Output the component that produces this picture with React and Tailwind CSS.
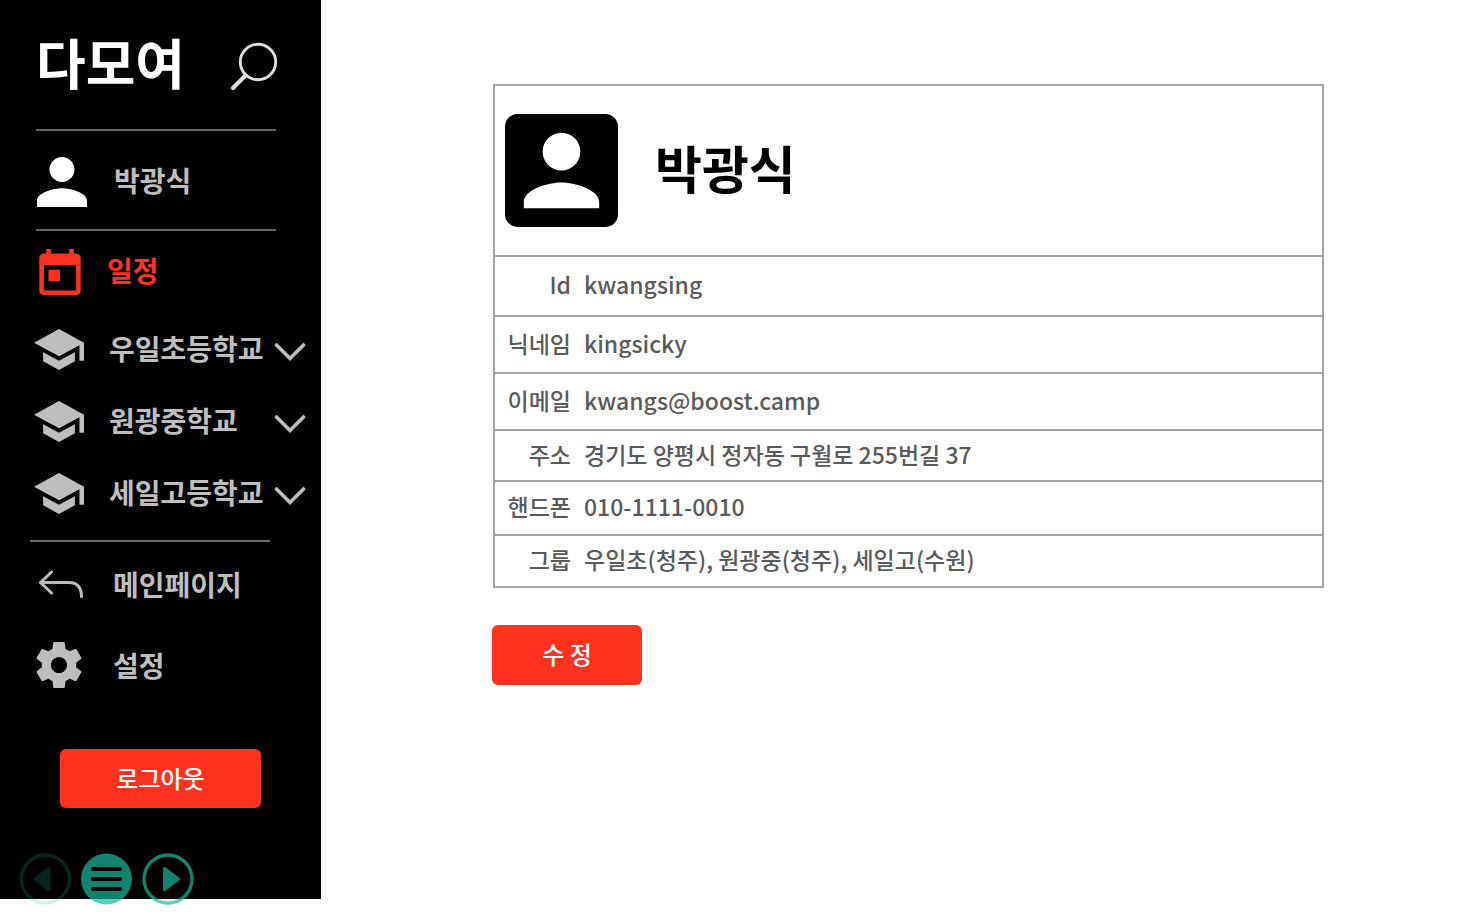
import React from "react";

const PERSON =
  "M12 12c2.21 0 4-1.79 4-4s-1.79-4-4-4-4 1.79-4 4 1.79 4 4 4zm0 2c-2.67 0-8 1.34-8 4v2h16v-2c0-2.66-5.33-4-8-4z";
const ACCOUNT_BOX =
  "M3 5v14c0 1.1.89 2 2 2h14c1.1 0 2-.9 2-2V5c0-1.1-.9-2-2-2H5c-1.11 0-2 .9-2 2zm12 4c0 1.66-1.34 3-3 3s-3-1.34-3-3 1.34-3 3-3 3 1.34 3 3zm-9 8c0-2 4-3.1 6-3.1s6 1.1 6 3.1v1H6v-1z";
const TODAY =
  "M19 3h-1V1h-2v2H8V1H6v2H5c-1.11 0-1.99.9-1.99 2L3 19c0 1.1.89 2 2 2h14c1.1 0 2-.9 2-2V5c0-1.1-.9-2-2-2zm0 16H5V8h14v11zM7 10h5v5H7z";
const SCHOOL =
  "M5 13.18v4L12 21l7-3.82v-4L12 17l-7-3.82zM12 3L1 9l11 6 9-4.91V17h2V9L12 3z";
const SETTINGS =
  "M19.43 12.98c.04-.32.07-.64.07-.98s-.03-.66-.07-.98l2.11-1.65c.19-.15.24-.42.12-.64l-2-3.46c-.12-.22-.39-.3-.61-.22l-2.49 1c-.52-.4-1.08-.73-1.69-.98l-.38-2.65C14.46 2.18 14.25 2 14 2h-4c-.25 0-.46.18-.49.42l-.38 2.65c-.61.25-1.17.59-1.69.98l-2.49-1c-.23-.09-.49 0-.61.22l-2 3.46c-.13.22-.07.49.12.64l2.11 1.65c-.04.32-.07.65-.07.98s.03.66.07.98l-2.11 1.65c-.19.15-.24.42-.12.64l2 3.46c.12.22.39.3.61.22l2.49-1c.52.4 1.08.73 1.69.98l.38 2.65c.03.24.24.42.49.42h4c.25 0 .46-.18.49-.42l.38-2.65c.61-.25 1.17-.59 1.69-.98l2.49 1c.23.09.49 0 .61-.22l2-3.46c.12-.22.07-.49-.12-.64l-2.11-1.65zM12 15.5c-1.93 0-3.5-1.57-3.5-3.5s1.57-3.5 3.5-3.5 3.5 1.57 3.5 3.5-1.57 3.5-3.5 3.5z";

function Glyph({ d, viewBox, className }) {
  return (
    <svg viewBox={viewBox} className={className} fill="currentColor" aria-hidden="true">
      <path d={d} />
    </svg>
  );
}

function SearchIcon() {
  return (
    <svg viewBox="0 0 48 48" className="h-12 w-12" fill="none" stroke="currentColor" strokeLinecap="round" aria-hidden="true">
      <circle cx="28" cy="20" r="17.7" strokeWidth="2.9" />
      <path d="M15.5 33.5 3 46" strokeWidth="4" />
    </svg>
  );
}

function BackIcon() {
  return (
    <svg viewBox="0 0 46 28" className="h-7 w-[46px]" fill="none" stroke="currentColor" strokeWidth="3" strokeLinecap="round" strokeLinejoin="round" aria-hidden="true">
      <path d="M13.5 2 2.5 12.500 13.500 23" />
      <path d="M3 12.500H31C39 12.500 43.500 17.500 43.500 26.500" />
    </svg>
  );
}

function ChevronIcon() {
  return (
    <svg viewBox="0 0 32 20" className="h-5 w-8" fill="none" stroke="currentColor" strokeWidth="3.6" strokeLinecap="round" aria-hidden="true">
      <path d="M2.500 3 16 16.500 29.500 3" />
    </svg>
  );
}

function School({ name }) {
  return (
    <li>
      <button type="button" className="flex h-[72px] w-full items-center pl-[34px] pr-[15px] text-left">
        <Glyph d={SCHOOL} viewBox="1 3 22 18" className="h-[41px] w-[50px] shrink-0" />
        <span className="ml-[25px] flex-1 pb-[2px] whitespace-nowrap">{name}</span>
        <span className="pt-[6px]">
          <ChevronIcon />
        </span>
      </button>
    </li>
  );
}

function Sidebar() {
  return (
    <aside className="w-[321px] shrink-0 bg-black pb-[91px] text-[28px] leading-10 font-bold text-[#bebebe]">
      <header className="flex h-[129px] items-center justify-between pl-9 pr-[43px]">
        <h1 className="pb-[6px] text-[54px] leading-[72px] text-white">다모여</h1>
        <button type="button" aria-label="검색" className="pt-[2px] text-[#dedede]">
          <SearchIcon />
        </button>
      </header>
      <hr className="ml-9 w-60 border-t-2 border-[#6b6b6b]" />
      <div className="flex h-[98px] items-center pl-[37px]">
        <Glyph d={PERSON} viewBox="4 4 16 16" className="mt-[3px] h-[50px] w-[50px] text-white" />
        <span className="ml-[27px]">박광식</span>
      </div>
      <hr className="ml-9 w-60 border-t-2 border-[#6b6b6b]" />
      <nav>
        <a href="#schedule" className="flex h-[82px] items-center pl-[39px] text-[#ff321f]">
          <Glyph d={TODAY} viewBox="3 1 18 20" className="h-[46px] w-[42px]" />
          <span className="ml-[26px] pb-1">일정</span>
        </a>
        <ul>
          <School name="우일초등학교" />
          <School name="원광중학교" />
          <School name="세일고등학교" />
        </ul>
        <hr className="ml-[30px] mt-[11px] w-60 border-t-2 border-[#6b6b6b]" />
        <a href="#main" className="flex h-[84px] items-center pl-[38px]">
          <BackIcon />
          <span className="ml-[29px]">메인페이지</span>
        </a>
        <a href="#settings" className="flex h-[78px] items-center pl-9">
          <Glyph d={SETTINGS} viewBox="2 2 20 20" className="h-[46px] w-[46px]" />
          <span className="ml-[31px]">설정</span>
        </a>
      </nav>
      <button
        type="button"
        className="mx-auto mt-[45px] block h-[59px] w-[201px] rounded-md bg-[#ff321f] pb-[2px] text-2xl font-medium text-white"
      >
        로그아웃
      </button>
    </aside>
  );
}

const ROWS = [
  { label: "Id", value: "kwangsing", height: "h-[60px]" },
  { label: "닉네임", value: "kingsicky", height: "h-[57px]" },
  { label: "이메일", value: "kwangs@boost.camp", height: "h-[57px]" },
  { label: "주소", value: "경기도 양평시 정자동 구월로 255번길 37", height: "h-[51px]" },
  { label: "핸드폰", value: "010-1111-0010", height: "h-[54px]" },
  { label: "그룹", value: "우일초(청주), 원광중(청주), 세일고(수원)", height: "h-[51px]" },
];

function Profile() {
  return (
    <main className="flex-1 pl-[171px] pr-[145px] pt-[84px]">
      <section className="ml-px border-2 border-[#a3a3a3]">
        <div className="flex h-[169px] items-center pl-[10px]">
          <Glyph d={ACCOUNT_BOX} viewBox="3 3 18 18" className="h-[113px] w-[113px] text-black" />
          <h2 className="ml-[37px] pb-2 text-[51px] leading-[72px] font-bold text-black">박광식</h2>
        </div>
        <table className="w-full text-[23px] leading-8 font-medium text-[#5a5a5a]">
          <tbody>
            {ROWS.map((row) => (
              <tr key={row.label} className={row.height}>
                <th scope="row" className="w-[76px] border-t-2 border-[#a3a3a3] p-0 pb-1 text-right font-medium whitespace-nowrap">
                  {row.label}
                </th>
                <td className="border-t-2 border-[#a3a3a3] pt-0 pb-1 pl-[13px]">{row.value}</td>
              </tr>
            ))}
          </tbody>
        </table>
      </section>
      <button type="button" className="mt-[37px] h-[60px] w-[150px] rounded-md bg-[#ff321f] pb-[2px] text-2xl font-medium text-white">
        수 정
      </button>
    </main>
  );
}

function PlayerControls() {
  return (
    <div className="absolute left-5 top-[853px] flex gap-[10px] text-[#1abc9c]">
      <button type="button" aria-label="이전" disabled className="opacity-20">
        <svg viewBox="0 0 52 52" className="h-[52px] w-[52px]" fill="none" stroke="currentColor">
          <circle cx="25.500" cy="26" r="24" strokeWidth="3.3" />
          <path d="M29 15.500V36.500L15 26Z" fill="currentColor" strokeWidth="3" strokeLinejoin="round" />
        </svg>
      </button>
      <button type="button" aria-label="메뉴" className="opacity-70">
        <svg viewBox="0 0 52 52" className="h-[52px] w-[52px] overflow-visible">
          <mask id="menu-bars" maskUnits="userSpaceOnUse" x="-2" y="-2" width="56" height="56">
            <rect x="-2" y="-2" width="56" height="56" fill="white" />
            <path d="M11 16H38M11 26H38M11 36H38" stroke="black" strokeWidth="4" strokeLinecap="round" />
          </mask>
          <circle cx="24.500" cy="26" r="25.500" fill="currentColor" mask="url(#menu-bars)" />
        </svg>
      </button>
      <button type="button" aria-label="다음" className="opacity-70">
        <svg viewBox="0 0 52 52" className="h-[52px] w-[52px] overflow-visible" fill="none" stroke="currentColor">
          <circle cx="24" cy="26" r="24" strokeWidth="3.3" />
          <path d="M20.500 15.500V36.500L34.500 26Z" fill="currentColor" strokeWidth="3" strokeLinejoin="round" />
        </svg>
      </button>
    </div>
  );
}

export default function App() {
  return (
    <div className="relative flex min-h-screen items-start bg-white font-['Noto_Sans_CJK_KR',sans-serif]">
      <Sidebar />
      <Profile />
      <PlayerControls />
    </div>
  );
}
